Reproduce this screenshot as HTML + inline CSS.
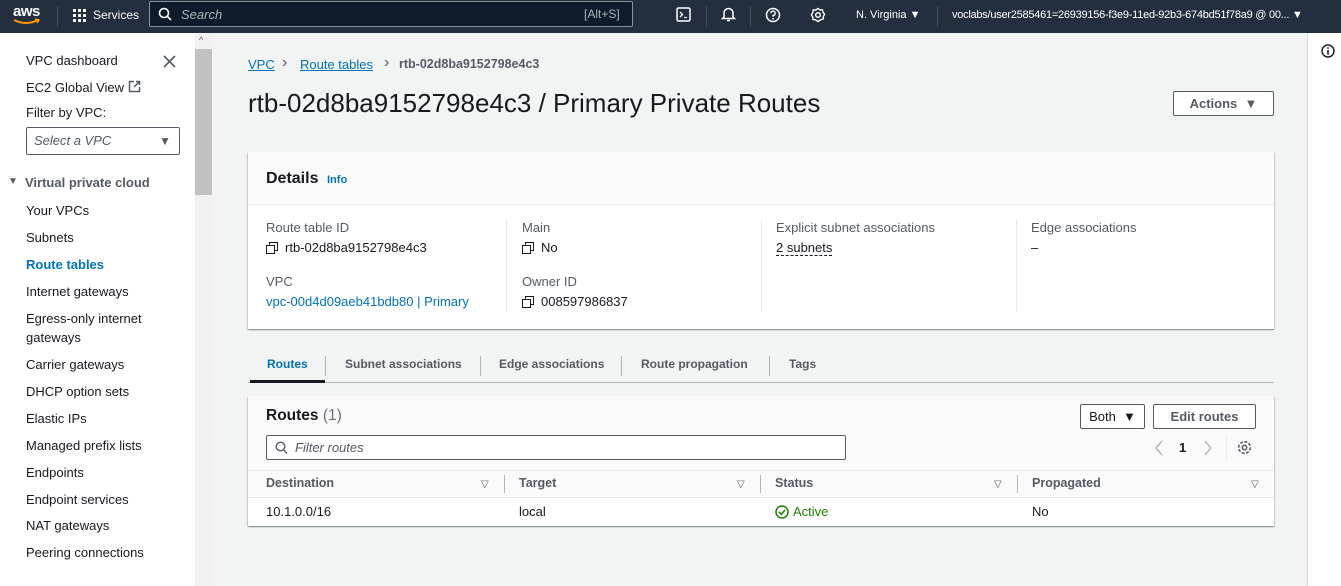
<!DOCTYPE html>
<html><head><meta charset="utf-8"><style>
*{box-sizing:border-box;margin:0;padding:0}
body{width:1341px;height:586px;overflow:hidden;font-family:"Liberation Sans",sans-serif;font-size:13px;color:#16191f;background:#f2f3f3;position:relative}
.a{position:absolute;white-space:nowrap}
.top{position:absolute;left:0;top:0;width:1341px;height:33px;background:#232f3e;color:#fff}
.side{position:absolute;left:0;top:33px;width:195px;height:553px;background:#fff}
.sb{position:absolute;left:195px;top:33px;width:17px;height:553px;background:#f1f1f1}
.right{position:absolute;left:1307px;top:33px;width:34px;height:553px;background:#fff;border-left:1px solid #d5dbdb}
.card{position:absolute;background:#fff;box-shadow:0 1px 1px rgba(0,28,36,.3),1px 1px 1px rgba(0,28,36,.15),-1px 1px 1px rgba(0,28,36,.15)}
.lnk{color:#0073bb}
.g{color:#545b64}
.btn{position:absolute;border:1px solid #545b64;background:#fff;font-weight:bold;color:#545b64;text-align:center;border-radius:2px}
.cp{display:inline-block;width:11px;height:11px;position:relative;vertical-align:-1px;margin-right:8px}
.cp:before{content:"";position:absolute;left:3px;top:0;width:7px;height:7px;border:1.5px solid #16191f}
.cp:after{content:"";position:absolute;left:0;top:3px;width:7px;height:7px;border:1.5px solid #16191f;background:#fff}
.vl{position:absolute;width:1px;background:#eaeded}
.th{font-weight:bold;color:#545b64;font-size:12.5px}
.tab{font-weight:bold;font-size:12px}
</style></head><body>
<div class="top">
 <div class="a" style="left:13px;top:3px;font-size:15px;font-weight:bold;letter-spacing:-0.5px">aws</div>
 <svg class="a" style="left:12px;top:18px" width="30" height="8"><path d="M2 2 Q14 8 26 2" stroke="#f90" stroke-width="2" fill="none"/><path d="M23 1 L27 2 L25 5" stroke="#f90" stroke-width="1.5" fill="none"/></svg>
 <div class="a" style="left:57px;top:6px;width:1px;height:21px;background:#414d5c"></div>
 <svg class="a" style="left:73px;top:9px" width="14" height="14" fill="#fff"><rect x="0" y="0" width="3" height="3"/><rect x="5" y="0" width="3" height="3"/><rect x="10" y="0" width="3" height="3"/><rect x="0" y="5" width="3" height="3"/><rect x="5" y="5" width="3" height="3"/><rect x="10" y="5" width="3" height="3"/><rect x="0" y="10" width="3" height="3"/><rect x="5" y="10" width="3" height="3"/><rect x="10" y="10" width="3" height="3"/></svg>
 <div class="a" style="left:93px;top:8px;font-size:12px">Services</div>
 <div class="a" style="left:149px;top:1px;width:484px;height:26px;border:1px solid #879596;border-radius:2px;background:#0f1b2a"></div>
 <svg class="a" style="left:158px;top:7px" width="14" height="14"><circle cx="6" cy="6" r="4.5" stroke="#fff" stroke-width="1.6" fill="none"/><path d="M9.5 9.5 L13 13" stroke="#fff" stroke-width="1.6"/></svg>
 <div class="a" style="left:181px;top:7px;font-size:13px;font-style:italic;color:#aab7b8">Search</div>
 <div class="a" style="left:584px;top:7px;font-size:12px;color:#aab7b8">[Alt+S]</div>
 <svg class="a" style="left:676px;top:7px" width="15" height="15"><rect x="1" y="1" width="13" height="13" rx="1.5" stroke="#fff" stroke-width="1.5" fill="none"/><path d="M4 5 L6.5 7.5 L4 10 M8 10.5 H11" stroke="#fff" stroke-width="1.3" fill="none"/></svg>
 <div class="a" style="left:706px;top:6px;width:1px;height:21px;background:#414d5c"></div>
 <svg class="a" style="left:721px;top:6px" width="15" height="16"><path d="M3 11 V7 A4.5 4.5 0 0 1 12 7 V11 L13.5 12.5 H1.5 Z" stroke="#fff" stroke-width="1.5" fill="none"/><path d="M6 14.5 H9" stroke="#fff" stroke-width="1.5"/></svg>
 <div class="a" style="left:750px;top:6px;width:1px;height:21px;background:#414d5c"></div>
 <svg class="a" style="left:765px;top:7px" width="16" height="16"><circle cx="8" cy="8" r="6.5" stroke="#fff" stroke-width="1.5" fill="none"/><path d="M5.8 6.3 A2.2 2.2 0 1 1 8 8.5 V9.8" stroke="#fff" stroke-width="1.4" fill="none"/><circle cx="8" cy="11.8" r="0.9" fill="#fff"/></svg>
 <svg class="a" style="left:810px;top:7px" width="16" height="16"><circle cx="8" cy="8" r="2.3" stroke="#fff" stroke-width="1.5" fill="none"/><path d="M8 1.5 L10 3 L12.5 2.8 L13 5.3 L14.6 7.3 L13.3 9.5 L13.2 12 L10.8 12.7 L8 14.5 L5.5 12.8 L3 12.4 L2.7 9.8 L1.4 8 L2.8 5.5 L3.3 3 L5.8 3 Z" stroke="#fff" stroke-width="1.4" fill="none"/></svg>
 <div class="a" style="left:856px;top:9px;font-size:11px">N. Virginia ▼</div>
 <div class="a" style="left:937px;top:6px;width:1px;height:21px;background:#414d5c"></div>
 <div class="a" style="left:952px;top:9px;font-size:11px;letter-spacing:-0.25px">voclabs/user2585461=26939156-f3e9-11ed-92b3-674bd51f78a9 @ 00... ▼</div>
</div>

<div class="side">
 <div class="a" style="left:26px;top:20px">VPC dashboard</div>
 <svg class="a" style="left:163px;top:22px" width="13" height="13"><path d="M1 1 L12 12 M12 1 L1 12" stroke="#545b64" stroke-width="1.6"/></svg>
 <div class="a" style="left:26px;top:47px">EC2 Global View</div>
 <svg class="a" style="left:128px;top:47px" width="13" height="13"><path d="M6 1.5 H1.5 V11.5 H11.5 V7" stroke="#545b64" stroke-width="1.5" fill="none"/><path d="M8 1.5 H11.5 V5 M11.5 1.5 L6 7" stroke="#545b64" stroke-width="1.5" fill="none"/></svg>
 <div class="a" style="left:26px;top:72px">Filter by VPC:</div>
 <div class="a" style="left:26px;top:94px;width:154px;height:28px;border:1px solid #545b64;border-radius:2px"></div>
 <div class="a" style="left:34px;top:100px;font-style:italic;color:#545b64">Select a VPC</div>
 <div class="a" style="left:159px;top:101px;font-size:12px;color:#545b64">▼</div>
 <div class="a" style="left:8px;top:143px;font-size:10px;color:#545b64">▼</div>
 <div class="a" style="left:25px;top:142px;font-weight:bold;color:#545b64">Virtual private cloud</div>
 <div class="a" style="left:26px;top:170px">Your VPCs</div>
 <div class="a" style="left:26px;top:197px">Subnets</div>
 <div class="a lnk" style="left:26px;top:224px;font-weight:bold">Route tables</div>
 <div class="a" style="left:26px;top:251px">Internet gateways</div>
 <div class="a" style="left:26px;top:278px">Egress-only internet</div>
 <div class="a" style="left:26px;top:297px">gateways</div>
 <div class="a" style="left:26px;top:324px">Carrier gateways</div>
 <div class="a" style="left:26px;top:351px">DHCP option sets</div>
 <div class="a" style="left:26px;top:378px">Elastic IPs</div>
 <div class="a" style="left:26px;top:405px">Managed prefix lists</div>
 <div class="a" style="left:26px;top:432px">Endpoints</div>
 <div class="a" style="left:26px;top:459px">Endpoint services</div>
 <div class="a" style="left:26px;top:485px">NAT gateways</div>
 <div class="a" style="left:26px;top:512px">Peering connections</div>
</div>
<div class="sb"><div class="a" style="left:4px;top:2px;font-size:9px;color:#555">^</div><div class="a" style="left:0;top:16px;width:17px;height:146px;background:#c1c1c1"></div></div>
<div class="right"><svg class="a" style="left:13px;top:11px" width="14" height="14"><circle cx="7" cy="7" r="6" stroke="#16191f" stroke-width="1.4" fill="none"/><path d="M7 6 V10.5" stroke="#16191f" stroke-width="1.6"/><circle cx="7" cy="4" r="0.9" fill="#16191f"/></svg></div>

<div class="a lnk" style="left:248px;top:57px;text-decoration:underline">VPC</div>
<div class="a g" style="left:282px;top:54px;font-size:16px">›</div>
<div class="a lnk" style="left:300px;top:57px;text-decoration:underline">Route tables</div>
<div class="a g" style="left:384px;top:54px;font-size:16px">›</div>
<div class="a g" style="left:399px;top:57px;font-weight:bold;font-size:12.5px">rtb-02d8ba9152798e4c3</div>
<div class="a" style="left:248px;top:88px;font-size:26px">rtb-02d8ba9152798e4c3 / Primary Private Routes</div>
<div class="btn" style="left:1173px;top:91px;width:101px;height:25px;line-height:23px">Actions &nbsp;▼</div>

<div class="card" style="left:248px;top:152px;width:1026px;height:177px">
 <div class="a" style="left:0;top:0;width:1026px;height:53px;background:#fafafa;border-bottom:1px solid #eaeded"></div>
 <div class="a" style="left:18px;top:18px;font-size:16px;font-weight:bold">Details</div>
 <div class="a lnk" style="left:79px;top:22px;font-size:11px;font-weight:bold">Info</div>
 <div class="a g" style="left:18px;top:68px">Route table ID</div>
 <div class="a" style="left:18px;top:88px"><span class="cp"></span>rtb-02d8ba9152798e4c3</div>
 <div class="a g" style="left:18px;top:122px">VPC</div>
 <div class="a lnk" style="left:18px;top:142px">vpc-00d4d09aeb41bdb80 | Primary</div>
 <div class="vl" style="left:258px;top:67px;height:94px"></div>
 <div class="a g" style="left:274px;top:68px">Main</div>
 <div class="a" style="left:274px;top:88px"><span class="cp"></span>No</div>
 <div class="a g" style="left:274px;top:122px">Owner ID</div>
 <div class="a" style="left:274px;top:142px"><span class="cp"></span>008597986837</div>
 <div class="vl" style="left:513px;top:67px;height:94px"></div>
 <div class="a g" style="left:528px;top:68px">Explicit subnet associations</div>
 <div class="a" style="left:528px;top:88px;border-bottom:1px dashed #16191f">2 subnets</div>
 <div class="vl" style="left:768px;top:67px;height:94px"></div>
 <div class="a g" style="left:783px;top:68px">Edge associations</div>
 <div class="a" style="left:783px;top:88px">–</div>
</div>

<div class="a" style="left:248px;top:382px;width:1026px;height:1px;background:#aab7b8"></div>
<div class="a" style="left:250px;top:380px;width:75px;height:3px;background:#16191f"></div>
<div class="a lnk tab" style="left:267px;top:357px">Routes</div>
<div class="vl" style="left:325px;top:356px;height:20px;background:#aab7b8"></div>
<div class="a g tab" style="left:345px;top:357px">Subnet associations</div>
<div class="vl" style="left:480px;top:356px;height:20px;background:#aab7b8"></div>
<div class="a g tab" style="left:499px;top:357px">Edge associations</div>
<div class="vl" style="left:621px;top:356px;height:20px;background:#aab7b8"></div>
<div class="a g tab" style="left:641px;top:357px">Route propagation</div>
<div class="vl" style="left:769px;top:356px;height:20px;background:#aab7b8"></div>
<div class="a g tab" style="left:789px;top:357px">Tags</div>

<div class="card" style="left:248px;top:396px;width:1026px;height:130px">
 <div class="a" style="left:0;top:0;width:1026px;height:74px;background:#fafafa"></div>
 <div class="a" style="left:18px;top:11px;font-size:15.5px;font-weight:bold">Routes <span style="font-weight:normal;color:#687078">(1)</span></div>
 <div class="btn" style="left:832px;top:8px;width:65px;height:25px;line-height:23px;font-weight:normal;color:#16191f">Both &nbsp;▼</div>
 <div class="btn" style="left:905px;top:8px;width:103px;height:25px;line-height:23px">Edit routes</div>
 <div class="a" style="left:18px;top:39px;width:580px;height:25px;border:1px solid #545b64;border-radius:2px;background:#fff"></div>
 <svg class="a" style="left:27px;top:45px" width="13" height="14"><circle cx="5.5" cy="5.5" r="4.3" stroke="#545b64" stroke-width="1.4" fill="none"/><path d="M8.5 8.8 L12 12.5" stroke="#545b64" stroke-width="1.4"/></svg>
 <div class="a g" style="left:47px;top:44px;font-style:italic">Filter routes</div>
 <svg class="a" style="left:906px;top:44px" width="10" height="16"><path d="M8 1 L2 8 L8 15" stroke="#aab7b8" stroke-width="1.4" fill="none"/></svg>
 <div class="a" style="left:931px;top:44px;font-weight:bold">1</div>
 <svg class="a" style="left:955px;top:44px" width="10" height="16"><path d="M2 1 L8 8 L2 15" stroke="#aab7b8" stroke-width="1.4" fill="none"/></svg>
 <div class="vl" style="left:978px;top:40px;height:24px"></div>
 <svg class="a" style="left:989px;top:44px" width="15" height="15"><circle cx="7.5" cy="7.5" r="2.2" stroke="#545b64" stroke-width="1.5" fill="none"/><circle cx="7.5" cy="7.5" r="5.8" stroke="#545b64" stroke-width="1.6" fill="none" stroke-dasharray="3 1.5"/></svg>
 <div class="a" style="left:0;top:74px;width:1026px;height:28px;background:#fafafa;border-top:1px solid #eaeded;border-bottom:1px solid #eaeded"></div>
 <div class="a th" style="left:18px;top:80px">Destination</div>
 <div class="a g" style="left:233px;top:83px;font-size:10px">▽</div>
 <div class="vl" style="left:256px;top:79px;height:18px;background:#aab7b8"></div>
 <div class="a th" style="left:271px;top:80px">Target</div>
 <div class="a g" style="left:489px;top:83px;font-size:10px">▽</div>
 <div class="vl" style="left:512px;top:79px;height:18px;background:#aab7b8"></div>
 <div class="a th" style="left:527px;top:80px">Status</div>
 <div class="a g" style="left:746px;top:83px;font-size:10px">▽</div>
 <div class="vl" style="left:769px;top:79px;height:18px;background:#aab7b8"></div>
 <div class="a th" style="left:784px;top:80px">Propagated</div>
 <div class="a g" style="left:1003px;top:83px;font-size:10px">▽</div>
 <div class="a" style="left:18px;top:108px">10.1.0.0/16</div>
 <div class="a" style="left:271px;top:108px">local</div>
 <svg class="a" style="left:527px;top:109px" width="14" height="14"><circle cx="7" cy="7" r="6" stroke="#1d8102" stroke-width="1.5" fill="none"/><path d="M4 7 L6.3 9.3 L10 5" stroke="#1d8102" stroke-width="1.6" fill="none"/></svg>
 <div class="a" style="left:545px;top:108px;color:#1d8102">Active</div>
 <div class="a" style="left:784px;top:108px">No</div>
</div>
</body></html>
